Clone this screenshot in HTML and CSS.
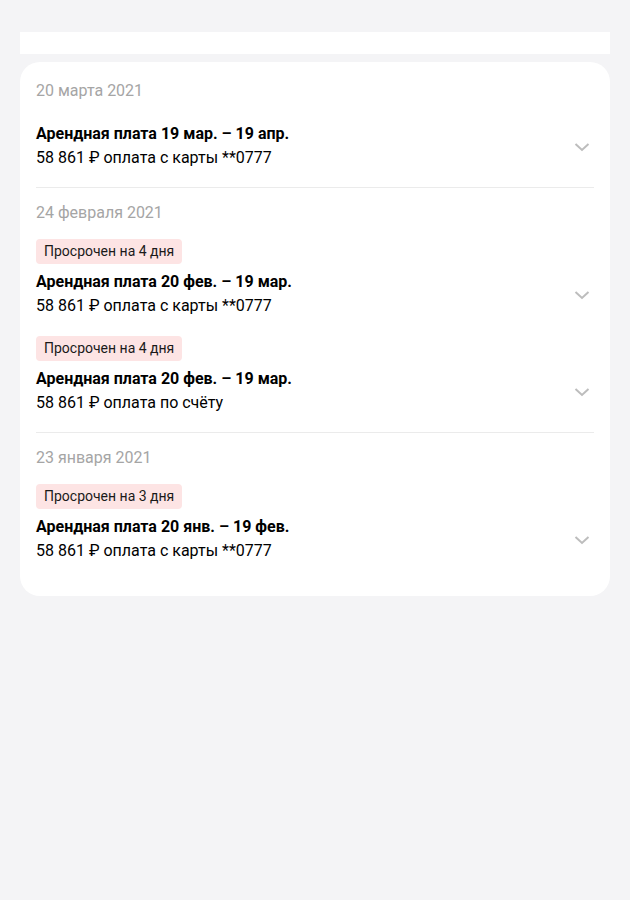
FILE: index.html
```html
<!DOCTYPE html>
<html lang="ru">
<head>
<meta charset="utf-8">
<title>Платежи</title>
<link rel="stylesheet" href="styles.css">
</head>
<body>
<div class="page">
  <div class="topbar"></div>
  <div class="card">
    <section class="group">
      <div class="date">20 марта 2021</div>
      <div class="item item--plain">
        <div class="item-text">
          <div class="title">Арендная плата 19 мар. – 19 апр.</div>
          <div class="sub">58 861 ₽ оплата с карты **0777</div>
        </div>
        <svg class="chev" width="24" height="24" viewBox="0 0 24 24"><path d="M5.5 9 L12 15 L18.5 9" fill="none" stroke="#bdbdbd" stroke-width="2"/></svg>
      </div>
    </section>
    <section class="group">
      <div class="date">24 февраля 2021</div>
      <div class="item">
        <div class="item-text">
          <span class="badge">Просрочен на 4 дня</span>
          <div class="row">
            <div class="lines">
              <div class="title">Арендная плата 20 фев. – 19 мар.</div>
              <div class="sub">58 861 ₽ оплата с карты **0777</div>
            </div>
            <svg class="chev" width="24" height="24" viewBox="0 0 24 24"><path d="M5.5 9 L12 15 L18.5 9" fill="none" stroke="#bdbdbd" stroke-width="2"/></svg>
          </div>
        </div>
      </div>
      <div class="item">
        <div class="item-text">
          <span class="badge">Просрочен на 4 дня</span>
          <div class="row">
            <div class="lines">
              <div class="title">Арендная плата 20 фев. – 19 мар.</div>
              <div class="sub">58 861 ₽ оплата по счёту</div>
            </div>
            <svg class="chev" width="24" height="24" viewBox="0 0 24 24"><path d="M5.5 9 L12 15 L18.5 9" fill="none" stroke="#bdbdbd" stroke-width="2"/></svg>
          </div>
        </div>
      </div>
    </section>
    <section class="group">
      <div class="date">23 января 2021</div>
      <div class="item">
        <div class="item-text">
          <span class="badge">Просрочен на 3 дня</span>
          <div class="row">
            <div class="lines">
              <div class="title">Арендная плата 20 янв. – 19 фев.</div>
              <div class="sub">58 861 ₽ оплата с карты **0777</div>
            </div>
            <svg class="chev" width="24" height="24" viewBox="0 0 24 24"><path d="M5.5 9 L12 15 L18.5 9" fill="none" stroke="#bdbdbd" stroke-width="2"/></svg>
          </div>
        </div>
      </div>
    </section>
  </div>
</div>
</body>
</html>
```

FILE: styles.css
```css
html, body {
  margin: 0;
  padding: 0;
  background: #f4f4f6;
}
body {
  font-family: Roboto, "Noto Sans", sans-serif;
  color: #000;
}
.page {
  padding: 32px 20px 0;
}
.topbar {
  height: 22px;
  background: #fff;
}
.card {
  margin-top: 8px;
  background: #fff;
  border-radius: 20px;
  padding: 19px 16px 16px;
}
.group + .group {
  border-top: 1px solid #ebebeb;
  padding-top: 15px;
}
.date {
  font-size: 16px;
  line-height: 20px;
  color: #a5a5a5;
  margin-bottom: 16px;
}
.item {
  padding-bottom: 18px;
}
.item:last-child {
  padding-bottom: 17px;
}
.item--plain {
  padding-top: 5px;
  display: flex;
  align-items: center;
}
.item-text {
  flex: 1;
}
.row {
  display: flex;
  align-items: center;
}
.lines {
  flex: 1;
}
.badge {
  display: inline-block;
  background: #fde4e4;
  border-radius: 4px;
  font-size: 14px;
  line-height: 25px;
  height: 25px;
  padding: 0 8px;
  margin-bottom: 6px;
  color: #1a1a1a;
}
.title {
  font-size: 16px;
  line-height: 24px;
  font-weight: 700;
}
.sub {
  font-size: 16px;
  line-height: 24px;
}
.chev {
  flex: none;
  display: block;
  margin-top: 2px;
}
```
